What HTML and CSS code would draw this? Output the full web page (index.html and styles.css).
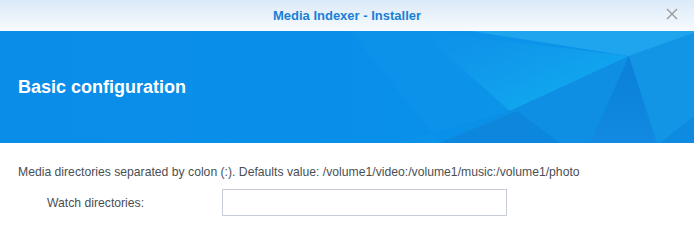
FILE: index.html
```html
<!DOCTYPE html>
<html lang="en">
<head>
    <meta charset="UTF-8">
    <title>Media Indexer - Installer</title>
    <link rel="stylesheet" href="styles.css">
</head>
<body>
    <div class="window">
        <div class="titlebar">
            <span class="title">Media Indexer - Installer</span>
            <svg class="close" width="12" height="12" viewBox="0 0 12 12">
                <path d="M1 1 L11 11 M11 1 L1 11" stroke="#9a9a9a" stroke-width="1.4" fill="none"/>
            </svg>
        </div>

        <div class="banner">
            <svg class="banner-art" viewBox="0 0 694 112" preserveAspectRatio="none">
                <defs>
                    <linearGradient id="glow" x1="0" y1="0" x2="1" y2="1">
                        <stop offset="0" stop-color="#1a9cec" stop-opacity="0"/>
                        <stop offset="1" stop-color="#10b4f1"/>
                    </linearGradient>
                    <linearGradient id="shade" x1="0" y1="0" x2="0" y2="1">
                        <stop offset="0" stop-color="#0a80d9"/>
                        <stop offset="1" stop-color="#128ae1"/>
                    </linearGradient>
                </defs>
                <polygon points="350,0 470,0 629,25 510,80 397,112 440,112" fill="#1598ea" opacity="0.3"/>
                <polygon points="420,0 629,25 510,80" fill="url(#glow)"/>
                <polygon points="470,0 694,0 694,2 629,25" fill="#1fa5ee"/>
                <polygon points="510,80 629,25 590,112 440,112" fill="#0f8fe3"/>
                <polygon points="440,112 517,80 560,112" fill="#0a80d8" opacity="0.5"/>
                <polygon points="629,25 657,112 590,112" fill="url(#shade)"/>
                <polygon points="629,25 694,2 694,112 657,112" fill="#1395e6"/>
                <polygon points="694,85 694,112 660,112" fill="#0c86dc" opacity="0.6"/>
            </svg>
            <h1>Basic configuration</h1>
        </div>

        <div class="content">
            <p class="hint">Media directories separated by colon (:). Defaults value: /volume1/video:/volume1/music:/volume1/photo</p>
            <div class="field">
                <label for="watch_dirs">Watch directories:</label>
                <input type="text" id="watch_dirs" name="watch_dirs">
            </div>
        </div>
    </div>
</body>
</html>
```

FILE: styles.css
```css
body {
    margin: 0;
    font-family: "Liberation Sans", Arial, sans-serif;
    background-color: #fff;
}
.window {
    width: 694px;
    height: 242px;
    overflow: hidden;
}
.titlebar {
    height: 31px;
    position: relative;
    display: flex;
    align-items: center;
    justify-content: center;
    background: linear-gradient(to bottom, #dbeaf8, #f7fbfe);
}
.title {
    font-size: 13px;
    font-weight: bold;
    color: #1a7fd4;
}
.close {
    position: absolute;
    right: 16px;
    top: 8px;
}
.banner {
    height: 112px;
    position: relative;
    display: flex;
    align-items: center;
    background: linear-gradient(to right, #0a8de9, #0892ea);
}
.banner-art {
    position: absolute;
    left: 0;
    top: 0;
    width: 100%;
    height: 100%;
}
.banner h1 {
    position: relative;
    margin: 0 0 0 18px;
    font-size: 18px;
    font-weight: bold;
    color: #fff;
}
.content {
    padding: 21px 18px 0 18px;
}
.hint {
    margin: 0;
    font-size: 12.2px;
    line-height: 16px;
    color: #4a4f55;
}
.field {
    display: flex;
    align-items: center;
    margin-top: 9px;
    padding-left: 29px;
}
.field label {
    width: 175px;
    font-size: 12.2px;
    color: #4a4f55;
}
.field input[type="text"] {
    width: 285px;
    height: 27px;
    box-sizing: border-box;
    border: 1px solid #c6cdd6;
    border-radius: 0;
    padding: 0 6px;
    margin: 0;
    background: #fff;
}
```
